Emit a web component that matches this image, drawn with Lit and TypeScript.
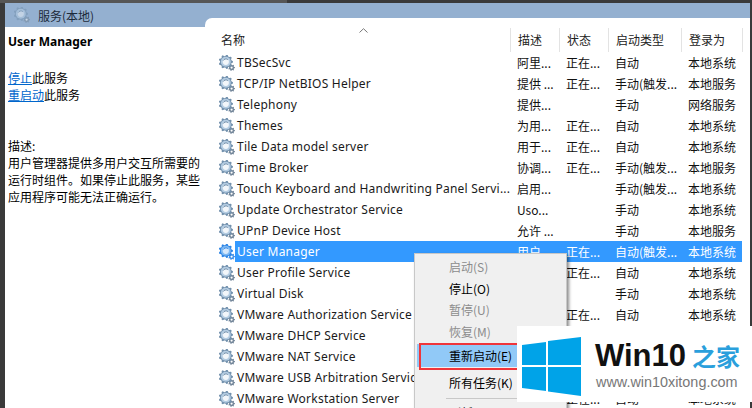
import { LitElement, html, css, svg } from "lit";
import { customElement } from "lit/decorators.js";

const gearPath = (cx: number, cy: number, ro: number, ri: number, teeth: number) => {
  let d = "";
  const n = teeth * 4;
  for (let i = 0; i < n; i++) {
    const a = ((i - 0.5) / n) * Math.PI * 2;
    const r = i % 4 < 2 ? ro : ri;
    d += `${i ? "L" : "M"}${(cx + r * Math.cos(a)).toFixed(2)} ${(cy + r * Math.sin(a)).toFixed(2)}`;
  }
  return d + "Z";
};
const big = gearPath(6.8, 6.8, 7.2, 5.8, 9);
const small = gearPath(12.6, 12.6, 3.4, 2.5, 7);

const gear = (sel = false) => html`<svg class="gear" viewBox="0 0 16 16" width="16" height="16">
  ${svg`
    <path d=${small} fill=${sel ? "#3f90e8" : "#74879a"}/>
    <circle cx="12.6" cy="12.6" r="1.1" fill="#fff"/>
    <path d=${big} fill=${sel ? "#2f86e6" : "#7391ad"}/>
    <circle cx="6.8" cy="6.8" r="5" fill=${sel ? "#7db8f2" : "#b4cce2"}/>
    <circle cx="6.8" cy="6.8" r="3.100" fill=${sel ? "#d6e8fb" : "#f2f6fa"}/>
    <path d="M4.200 5.600a3 3 0 0 1 4.600-1" stroke=${sel ? "#2f86e6" : "#6c8aa6"} fill="none" stroke-width="1"/>
  `}
</svg>`;

const rows: string[][] = [
  ["TBSecSvc", "阿里...", "正在...", "自动", "本地系统"],
  ["TCP/IP NetBIOS Helper", "提供 ...", "正在...", "手动(触发...", "本地服务"],
  ["Telephony", "提供...", "", "手动", "网络服务"],
  ["Themes", "为用...", "正在...", "自动", "本地系统"],
  ["Tile Data model server", "用于...", "正在...", "自动", "本地系统"],
  ["Time Broker", "协调...", "正在...", "手动(触发...", "本地服务"],
  ["Touch Keyboard and Handwriting Panel Servi...", "启用...", "", "手动(触发...", "本地系统"],
  ["Update Orchestrator Service", "Uso...", "", "手动", "本地系统"],
  ["UPnP Device Host", "允许 ...", "", "手动", "本地服务"],
  ["User Manager", "用户...", "正在...", "自动(触发...", "本地系统"],
  ["User Profile Service", "提供...", "正在...", "自动", "本地系统"],
  ["Virtual Disk", "提供...", "", "手动", "本地系统"],
  ["VMware Authorization Service", "用于...", "正在...", "自动", "本地系统"],
  ["VMware DHCP Service", "执行...", "正在...", "自动", "本地系统"],
  ["VMware NAT Service", "网络...", "正在...", "自动", "本地系统"],
  ["VMware USB Arbitration Service", "Arbi...", "正在...", "自动", "本地系统"],
  ["VMware Workstation Server", "用于...", "正在...", "自动", "本地系统"],
];

@customElement("app-root")
export class AppRoot extends LitElement {
  static styles = css`
    :host {
      display: block;
      position: relative;
      width: 752px;
      height: 408px;
      overflow: hidden;
      background: #3a3a3a;
      font-family: "Noto Sans", "Noto Sans CJK SC", sans-serif;
      font-size: 12px;
      color: #000;
    }
    .strip { display: flex; height: 3px; }
    .strip i { display: block; width: 287px; background: #565656; }
    .window {
      display: grid;
      grid-template-columns: 200px 545px;
      padding-left: 5px;
      height: 405px;
      box-sizing: border-box;
    }
    .left { display: flex; flex-direction: column; background: #fff; }
    .title {
      height: 24px;
      background: #94b0d0;
      display: flex;
      align-items: center;
      gap: 8px;
      padding-left: 9px;
      font-family: "Noto Sans CJK SC", sans-serif;
      font-size: 12px;
      color: #1c2a3a;
    }
    .title .icon { opacity: .5; display: flex; }
    .info {
      padding: 6px 0 0 3px;
      font-family: "Noto Sans CJK SC", sans-serif;
      line-height: 17px;
      font-size: 12px;
    }
    .name { font-family: "Noto Sans", sans-serif; font-weight: 700; font-size: 12px; height: 17px; }
    .links { margin-top: 19px; }
    .links a { color: #0066cc; text-decoration: underline; }
    .desc { margin-top: 34px; }
    .right { background: #94b0d0; padding-top: 15px; display: flex; min-height: 0; }
    .panel {
      flex: 1;
      background: #fff;
      border-top-left-radius: 7px;
      padding-left: 13px;
      overflow: hidden;
      min-width: 0;
    }
    .grid { display: grid; grid-template-columns: 17px 275px 49px 49px 73px 61px; }
    .head { height: 34px; align-items: start; position: relative; }
    .head .h {
      margin-top: 10px;
      height: 24px;
      line-height: 23px;
      padding-left: 7px;
      border-left: 1px solid #e3e3e3;
      box-sizing: border-box;
      font-family: "Noto Sans CJK SC", sans-serif;
      color: #222;
    }
    .head .n { grid-column: 1 / span 2; padding-left: 3px; position: relative; color: #222; font-family: "Noto Sans CJK SC", sans-serif; margin-top: 10px; line-height: 23px; }
    .caret { position: absolute; left: 141px; top: 0; }
    .head .end { position: absolute; left: 524px; top: 10px; width: 1px; height: 24px; background: #e3e3e3; }
    .row { height: 21px; line-height: 21px; white-space: nowrap; }
    .cell { padding-left: 7px; overflow: hidden; font-family: "Noto Sans CJK SC", sans-serif; color: #111; }
    .cell.nm { padding-left: 2px; font-family: "Noto Sans", sans-serif; font-size: 12px; letter-spacing: .23px; color: #1a1a1a; }
    .ic { display: flex; align-items: center; padding-left: 1px; }
    .sel .cell { background: #3399ff; color: #fff; }
    .menu {
      position: absolute;
      left: 414px;
      top: 253px;
      width: 153px;
      height: 170px;
      background: #f0f0f0;
      border: 1px solid #c8c8c8;
      box-sizing: border-box;
      box-shadow: 2px 2px 3px rgba(0,0,0,.45);
      padding: 2px 2px;
      font-family: "Noto Sans CJK SC", sans-serif;
      font-size: 12px;
    }
    .mi { height: 21.7px; line-height: 21.7px; padding-left: 32px; color: #000; }
    .mi.off { color: #8c8c8c; }
    .mi.act {
      margin: 1px 0 0 0;
      height: 23px;
      line-height: 23px;
      background: #91c9f7;
      position: relative;
    }
    .mi.act::after {
      content: "";
      position: absolute;
      left: 2px;
      top: -1px;
      width: 110px;
      height: 27px;
      border: 2px solid #f0353a;
      box-sizing: border-box;
    }
    .sep { height: 1px; background: #c8c8c8; margin: 4px 0 0 29px; }
    .gap { margin-top: 4px; height: 23px; line-height: 23px; }
    .last { margin-top: 3px; }
    .mark {
      position: absolute;
      left: 517px;
      top: 326px;
      width: 235px;
      height: 76px;
      background: #fff;
      display: flex;
      gap: 14px;
      padding-left: 5px;
      box-sizing: border-box;
      align-items: flex-start;
    }
    .logo { margin-top: 11px; flex: none; }
    .wm { display: flex; flex-direction: column; padding-top: 14px; }
    .wt { display: flex; align-items: center; height: 32px; gap: 0; font-family: "Liberation Sans", sans-serif; font-weight: 700; font-size: 31px; line-height: 32px; color: #111; }
    .wt span { font-family: "Noto Sans CJK SC", sans-serif; font-size: 24px; color: #2a9fdc; margin-left: 6px; }
    .url { font-family: "Liberation Sans", sans-serif; font-size: 14.4px; color: #777; line-height: 20px; margin-left: 1px; }
  `;

  render() {
    return html`
      <div class="strip"><i></i></div>
      <div class="window">
        <div class="left">
          <div class="title"><span class="icon">${gear()}</span>服务(本地)</div>
          <div class="info">
            <div class="name">User Manager</div>
            <div class="links">
              <div><a>停止</a>此服务</div>
              <div><a>重启动</a>此服务</div>
            </div>
            <div class="desc">
              描述:<br />用户管理器提供多用户交互所需要的<br />运行时组件。如果停止此服务，某些<br />应用程序可能无法正确运行。
            </div>
          </div>
        </div>
        <div class="right">
          <div class="panel">
            <div class="grid head">
              <div class="n">名称<svg class="caret" width="9" height="5" viewBox="0 0 9 5"><path d="M.5 4.5 4.5.7l4 3.8" fill="none" stroke="#777"/></svg></div>
              <div class="h">描述</div><div class="h">状态</div><div class="h">启动类型</div><div class="h">登录为</div>
              <div class="end"></div>
            </div>
            ${rows.map((r, i) => html`
              <div class="grid row ${i === 9 ? "sel" : ""}">
                <div class="ic">${gear(i === 9)}</div>
                <div class="cell nm">${r[0]}</div>
                <div class="cell">${r[1]}</div>
                <div class="cell">${r[2]}</div>
                <div class="cell">${r[3]}</div>
                <div class="cell">${r[4]}</div>
              </div>`)}
          </div>
        </div>
      </div>
      <div class="menu">
        <div class="mi off">启动(S)</div>
        <div class="mi">停止(O)</div>
        <div class="mi off">暂停(U)</div>
        <div class="mi off">恢复(M)</div>
        <div class="mi act">重新启动(E)</div>
        <div class="mi gap">所有任务(K)</div>
        <div class="sep"></div>
        <div class="mi last">刷新(F)</div>
      </div>
      <div class="mark">
        <svg class="logo" width="59" height="59" viewBox="0 0 59 59">
          <path d="M0 8 24 5V28H0ZM26 4 59 0V28H26ZM0 30H24V54L0 51ZM26 30H59V59L26 54.500Z" fill="#00a3e8"/>
        </svg>
        <div class="wm">
          <div class="wt">Win10<span>之家</span></div>
          <div class="url">www.win10xitong.com</div>
        </div>
      </div>
    `;
  }
}
